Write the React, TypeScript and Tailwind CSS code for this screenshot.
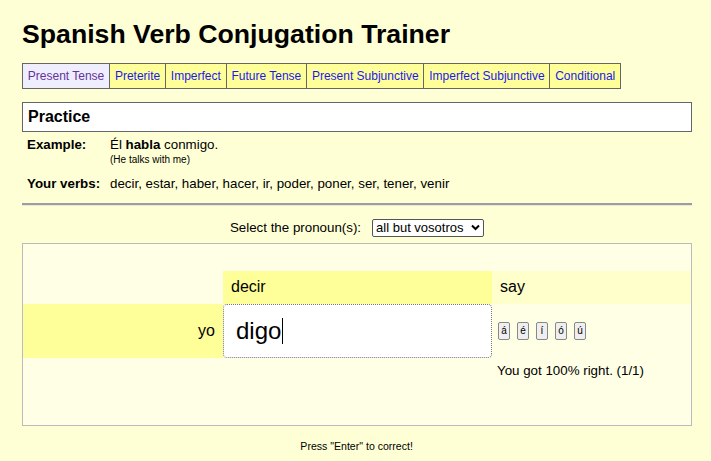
import { useState } from "react";

const tenses = [
  "Present Tense",
  "Preterite",
  "Imperfect",
  "Future Tense",
  "Present Subjunctive",
  "Imperfect Subjunctive",
  "Conditional",
];

const accents = ["á", "é", "í", "ó", "ú"];

export default function App() {
  const [active] = useState("Present Tense");

  return (
    <div className="min-h-screen bg-[#ffffd6] text-black font-['Liberation_Sans',Arial,sans-serif]">
      <div className="ml-[22px] w-[670px] pt-[19px]">
        <h1 className="text-[26.67px] font-bold leading-[30px]">
          Spanish Verb Conjugation Trainer
        </h1>

        <div className="mt-[14px] flex w-max border border-[#666]">
          {tenses.map((t, i) => (
            <div
              key={t}
              className={
                "h-[24px] px-[4.8px] flex items-center text-[12px] " +
                (i > 0 ? "border-l border-[#666] " : "") +
                (t === active
                  ? "bg-[#eeeeff] text-[#663399]"
                  : "bg-[#ffff99] text-[#1a1aee]")
              }
            >
              {t}
            </div>
          ))}
        </div>

        <div className="mt-[13px] h-[30px] border border-[#666] bg-white pl-[5px] flex items-center">
          <h2 className="text-[16px] font-bold">Practice</h2>
        </div>

        <div className="mt-[5px] pl-[5px] text-[13.33px] leading-[15px]">
          <div className="flex">
            <div className="w-[83px] font-bold">Example:</div>
            <div>
              <div>
                Él <b>habla</b> conmigo.
              </div>
              <div className="mt-[2px] text-[10px] leading-[12px]">(He talks with me)</div>
            </div>
          </div>
          <div className="flex mt-[10px]">
            <div className="w-[83px] font-bold">Your verbs:</div>
            <div>decir, estar, haber, hacer, ir, poder, poner, ser, tener, venir</div>
          </div>
        </div>

        <hr className="mt-[12px] border-0 border-t-[2px] border-t-[#9d9d9d] border-b border-b-[#e8e8e0]" />

        <div className="mt-[12px] flex items-center justify-center gap-[11px] text-[13.33px]">
          <span>Select the pronoun(s):</span>
          <div className="h-[18px] w-[112px] border border-[#555] rounded-[2px] bg-white flex items-center justify-between pl-[3px] pr-[3px] text-[13px]">
            <span>all but vosotros</span>
            <svg width="9" height="7" viewBox="0 0 9 7">
              <path d="M1 1.5 L4.5 5 L8 1.5" fill="none" stroke="#000" strokeWidth="2" />
            </svg>
          </div>
        </div>

        <div className="mt-[5px] h-[183px] border border-[#bbb] bg-[#ffffe6] pt-[27px]">
          <div className="grid grid-cols-[200px_269px_199px]">
            <div />
            <div className="h-[33px] bg-[#ffff99] pl-[8px] flex items-center text-[16px]">
              decir
            </div>
            <div className="h-[33px] bg-[#ffffcc] pl-[8px] flex items-center text-[16px]">
              say
            </div>

            <div className="h-[54px] bg-[#ffff99] pr-[8px] flex items-center justify-end text-[16px]">
              yo
            </div>
            <div className="h-[54px] bg-white border border-dotted border-[#777] rounded-[4px] pl-[12px] flex items-center text-[24px]">
              digo
              <span className="ml-[1px] inline-block w-[1px] h-[26px] bg-black" />
            </div>
            <div className="h-[54px] flex items-center gap-[7px] pl-[6px]">
              {accents.map((a) => (
                <button
                  key={a}
                  className="h-[18px] w-[12px] p-0 border border-[#888] rounded-[2px] bg-[#efefef] text-[10px] leading-none flex items-center justify-center"
                >
                  {a}
                </button>
              ))}
            </div>

            <div />
            <div />
            <div className="pl-[5px] pt-[3px] text-[13.33px]">You got 100% right. (1/1)</div>
          </div>
        </div>

        <div className="mt-[12px] flex justify-center">
          <span className="text-[11px] inline-block scale-x-[0.96]">Press "Enter" to correct!</span>
        </div>
      </div>
    </div>
  );
}
